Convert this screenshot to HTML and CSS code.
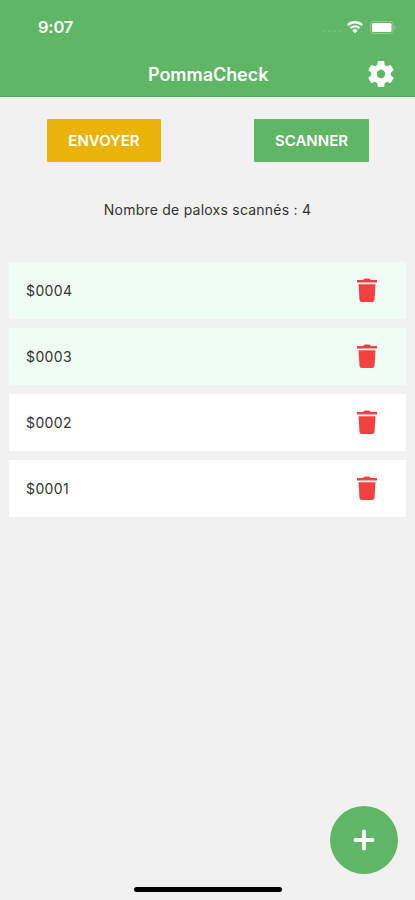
FILE: index.html
```html
<!DOCTYPE html>
<html lang="fr">
<head>
<meta charset="utf-8">
<title>PommaCheck</title>
<link rel="stylesheet" href="styles.css">
</head>
<body>
<svg class="defs" aria-hidden="true">
  <symbol id="trash" viewBox="0 0 20 24">
    <path d="M0 2h6.200Q6.800.5 8 .5h4q1.200 0 1.800 1.500H20v2.600H0z"/>
    <path d="M1.500 6.300h17l-1 15.500q-.2 2.200-2.300 2.200H4.800q-2.100 0-2.300-2.200z"/>
  </symbol>
</svg>
<div class="screen">
  <header class="header">
    <div class="status">
      <span class="time">9:07</span>
      <div class="indicators">
        <svg class="dots" viewBox="0 0 20 4"><path d="M1 2h3M6 2h3M11 2h3M16 2h3"/></svg>
        <svg class="wifi" viewBox="0 0 18 14"><path d="M1.700 5.200a10.500 10.500 0 0 1 14.600 0M4.500 8.200a6.500 6.500 0 0 1 9 0"/><path class="solid" d="M6.300 10.300a4 4 0 0 1 5.400 0L9 13.300z"/></svg>
        <svg class="battery" viewBox="0 0 27 13"><rect class="shell" x=".5" y=".5" width="22.500" height="12" rx="3"/><rect x="2" y="2" width="19.500" height="9" rx="1.500"/><path class="cap" d="M24.300 4.500q2 2 0 4z"/></svg>
      </div>
    </div>
    <div class="titlebar">
      <h1>PommaCheck</h1>
      <svg class="gear" viewBox="2 2 20 20"><path d="M19.430 12.980c.04-.32.07-.64.07-.98s-.03-.66-.07-.98l2.110-1.650c.19-.15.24-.42.12-.64l-2-3.460c-.12-.22-.39-.3-.61-.22l-2.490 1c-.52-.4-1.080-.73-1.690-.98l-.38-2.650A.488.488 0 0 0 14 2h-4c-.25 0-.46.18-.49.42l-.38 2.650c-.61.25-1.170.59-1.690.98l-2.490-1c-.23-.09-.49 0-.61.22l-2 3.460c-.13.22-.07.49.12.64l2.110 1.650c-.04.32-.07.65-.07.98s.03.66.07.98l-2.110 1.650c-.19.15-.24.42-.12.64l2 3.460c.12.22.39.3.61.22l2.490-1c.52.4 1.080.73 1.690.98l.38 2.650c.03.24.24.42.49.42h4c.25 0 .46-.18.49-.42l.38-2.650c.61-.25 1.170-.59 1.690-.98l2.490 1c.23.09.49 0 .61-.22l2-3.460c.12-.22.07-.49-.12-.64zM12 15.200A3.200 3.200 0 1 1 12 8.800a3.200 3.200 0 0 1 0 6.400z"/></svg>
    </div>
  </header>
  <div class="actions">
    <button class="btn send">ENVOYER</button>
    <button class="btn scan">SCANNER</button>
  </div>
  <p class="count"><span>Nombre de paloxs scannés : 4</span></p>
  <ul class="list">
    <li class="row sent"><span>$0004</span><svg class="trash"><use href="#trash"/></svg></li>
    <li class="row sent"><span>$0003</span><svg class="trash"><use href="#trash"/></svg></li>
    <li class="row"><span>$0002</span><svg class="trash"><use href="#trash"/></svg></li>
    <li class="row"><span>$0001</span><svg class="trash"><use href="#trash"/></svg></li>
  </ul>
  <footer class="bottom">
    <button class="fab" aria-label="Ajouter"><svg viewBox="0 0 22 22"><path d="M11 2.500v17M2.500 11h17"/></svg></button>
    <div class="home"></div>
  </footer>
</div>
</body>
</html>
```
FILE: styles.css
```css
* { box-sizing: border-box; }
body { margin: 0; font-family: Inter, "Liberation Sans", sans-serif; color: #333; }
.defs { display: none; }
.screen { width: 415px; height: 900px; display: flex; flex-direction: column; background: #f1f1f1; overflow: hidden; }
.header { height: 97px; flex: none; background: #5fb665; border-bottom: 1px solid #58ab5e; color: #fff; }
.status { height: 54px; padding: 0 18px 0 38px; display: flex; align-items: center; justify-content: space-between; }
.time { font-size: 16.500px; font-weight: 600; letter-spacing: -.2px; }
.indicators { display: flex; align-items: center; }
.indicators svg { fill: #fff; }
.dots { width: 20px; height: 4px; margin: 8px 4px 0 0; stroke: #83c888; stroke-width: 1; }
.wifi { width: 18px; height: 14px; margin-right: 6px; }
.wifi path { fill: none; stroke: #fff; stroke-width: 2.300; }
.wifi .solid { fill: #fff; stroke: none; }
.battery { width: 27px; height: 13px; }
.battery .shell { fill: none; stroke: #8fcd94; }
.battery .cap { fill: #a5d7a9; }
.titlebar { height: 40px; padding: 0 21px 0 148px; display: flex; align-items: center; justify-content: space-between; }
h1 { margin: 0; font-size: 18px; font-weight: 600; letter-spacing: -.05px; }
.gear { width: 26px; height: 26px; fill: #fff; }
.actions { margin: 22px 46px 0 47px; display: flex; justify-content: space-between; }
.btn { height: 43px; padding: 0; border: 0; border-radius: 1px; color: #fff; font: 600 15px Inter, sans-serif; }
.send { width: 114px; background: #eab308; }
.scan { width: 115px; background: #5fb665; }
.count { height: 24px; margin: 35px 0 41px; display: flex; align-items: center; justify-content: center; font-size: 14px; letter-spacing: .23px; color: #333; }
.list { margin: 0 9px; padding: 0; list-style: none; display: flex; flex-direction: column; gap: 9px; }
.row { height: 57px; padding: 0 29px 0 17px; display: flex; align-items: center; justify-content: space-between; background: #fff; font-size: 14px; letter-spacing: .4px; }
.sent { background: #f0fdf4; }
.trash { width: 20px; height: 24px; margin-bottom: 2px; fill: #f34141; }
.bottom { margin-top: auto; padding-bottom: 8px; display: flex; flex-direction: column; align-items: center; }
.fab { width: 68px; height: 68px; margin: 0 17px 13px 0; padding: 0; align-self: flex-end; border: 0; border-radius: 50%; background: #5fb665; display: grid; place-items: center; }
.fab svg { width: 22px; height: 22px; fill: none; stroke: #fff; stroke-width: 4; stroke-linecap: round; }
.home { width: 148px; height: 5px; border-radius: 3px; background: #000; }
```
